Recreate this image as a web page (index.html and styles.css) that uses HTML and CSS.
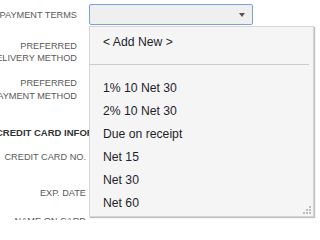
FILE: index.html
```html
<!DOCTYPE html>
<html>
<head>
<meta charset="utf-8">
<link rel="stylesheet" href="styles.css">
</head>
<body>
<div class="page">
  <div class="form">
    <div class="row r-terms">
      <div class="label">PAYMENT TERMS</div>
      <div class="field">
        <div class="select"><span class="arrow"></span></div>
      </div>
    </div>
    <div class="row">
      <div class="label two">PREFERRED<br>DELIVERY METHOD</div>
    </div>
    <div class="row">
      <div class="label two">PREFERRED<br>PAYMENT METHOD</div>
    </div>
    <div class="heading">CREDIT CARD INFORMATION</div>
    <div class="row cc r-no">
      <div class="label">CREDIT CARD NO.</div>
    </div>
    <div class="row cc r-exp">
      <div class="label">EXP. DATE</div>
    </div>
    <div class="row cc r-name">
      <div class="label">NAME ON CARD</div>
    </div>
  </div>

  <div class="menu">
    <div class="item">&lt; Add New &gt;</div>
    <div class="sep"></div>
    <div class="item">1% 10 Net 30</div>
    <div class="item">2% 10 Net 30</div>
    <div class="item">Due on receipt</div>
    <div class="item">Net 15</div>
    <div class="item">Net 30</div>
    <div class="item">Net 60</div>
    <svg class="grip" width="8" height="8" viewBox="0 0 8 8">
      <rect x="6" y="0" width="2" height="2" fill="#bdbdbd"/>
      <rect x="3" y="3" width="2" height="2" fill="#bdbdbd"/>
      <rect x="6" y="3" width="2" height="2" fill="#bdbdbd"/>
      <rect x="0" y="6" width="2" height="2" fill="#bdbdbd"/>
      <rect x="3" y="6" width="2" height="2" fill="#bdbdbd"/>
      <rect x="6" y="6" width="2" height="2" fill="#bdbdbd"/>
    </svg>
  </div>
</div>
</body>
</html>
```

FILE: styles.css
```css
html, body {
  margin: 0;
  padding: 0;
  background: #ffffff;
}

body {
  width: 317px;
  height: 220px;
  overflow: hidden;
  font-family: "Liberation Sans", Arial, sans-serif;
}

.page {
  position: relative;
  width: 317px;
  height: 220px;
  overflow: hidden;
}

.form {
  margin-left: -20px;
  margin-top: -4px;
  width: 337px;
}

.row {
  display: flex;
  align-items: center;
  height: 37.5px;
}

.label {
  width: 109px;
  flex: none;
  box-sizing: border-box;
  padding-right: 12px;
  text-align: right;
  white-space: nowrap;
  font-size: 9.2px;
  line-height: 12.5px;
  color: #5a5a5a;
}

.field {
  flex: 1;
}

.select {
  position: relative;
  width: 164px;
  height: 21px;
  box-sizing: border-box;
  border: 1px solid #7c9fe0;
  border-radius: 2px;
  background: #efefef;
}

.arrow {
  position: absolute;
  right: 7px;
  top: 8px;
  width: 0;
  height: 0;
  border-left: 3.5px solid transparent;
  border-right: 3.5px solid transparent;
  border-top: 4px solid #555555;
}

.heading {
  margin-top: 12px;
  height: 24px;
  line-height: 24px;
  padding-left: 16px;
  font-size: 9.5px;
  font-weight: bold;
  color: #333333;
  white-space: nowrap;
}

.cc {
  height: 26px;
}

.cc .label {
  padding-right: 3px;
}

.r-exp {
  margin-top: 10px;
}

.r-name {
  margin-top: 2px;
}

.menu {
  position: absolute;
  left: 89px;
  top: 26px;
  width: 225px;
  height: 191px;
  box-sizing: border-box;
  padding-top: 4px;
  background: #f5f5f5;
  border: 1px solid #d6d6d6;
  box-shadow: 1px 1px 1px rgba(0, 0, 0, 0.25);
}

.item {
  height: 23px;
  line-height: 23px;
  padding-left: 13px;
  font-size: 12.2px;
  color: #1f1f2e;
  white-space: nowrap;
}

.sep {
  height: 23px;
  box-sizing: border-box;
  padding-top: 10px;
  padding-right: 4px;
}

.sep::after {
  content: "";
  display: block;
  height: 1px;
  background: #cccccc;
}

.grip {
  position: absolute;
  right: 2px;
  bottom: 2px;
}
```
